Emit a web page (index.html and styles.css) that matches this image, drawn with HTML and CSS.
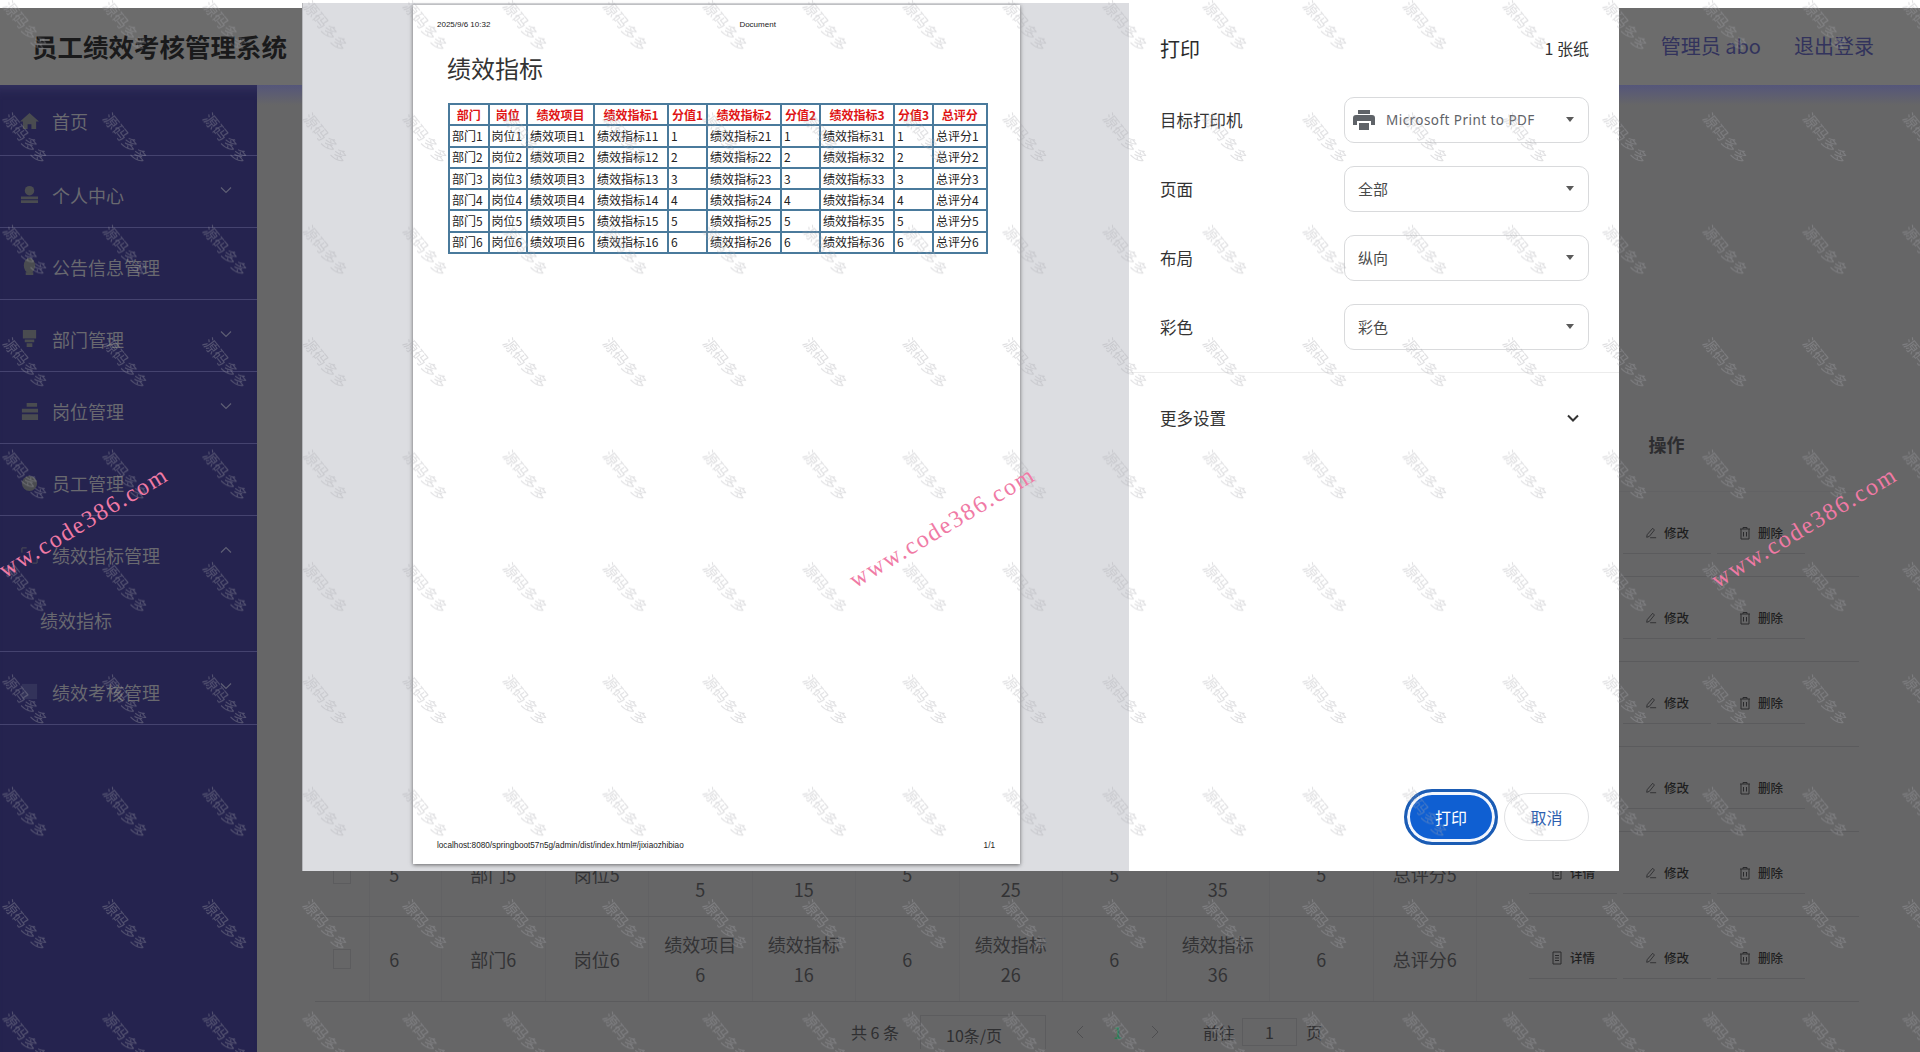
FILE: index.html
```html
<!DOCTYPE html>
<html lang="zh-CN">
<head>
<meta charset="utf-8">
<title>员工绩效考核管理系统</title>
<link rel="stylesheet" href="styles.css">
</head>
<body>
<svg class="defs" aria-hidden="true">
  <symbol id="i-doc" viewBox="0 0 12 14"><path d="M2 1h8v12H2zM4 4.500h4M4 7h4M4 9.500h4" fill="none" stroke="currentColor"/></symbol>
  <symbol id="i-edit" viewBox="0 0 14 14"><path d="M9 1.500l2 2-6 7.500-3 1 .5-3zM6 12.500h7" fill="none" stroke="currentColor"/></symbol>
  <symbol id="i-del" viewBox="0 0 12 14"><path d="M1 3h10M4 3V1.500h4V3M2 3v10h8V3M4.500 6v4.500M7.500 6v4.500" fill="none" stroke="currentColor"/></symbol>
  <symbol id="i-down" viewBox="0 0 12 8"><path d="M1 1.500l5 5 5-5" fill="none" stroke="currentColor" stroke-width="1.200"/></symbol>
  <symbol id="i-down-bold" viewBox="0 0 12 8"><path d="M1 1.500l5 5 5-5" fill="none" stroke="currentColor" stroke-width="2"/></symbol>
  <symbol id="i-up" viewBox="0 0 12 8"><path d="M1 6.500l5-5 5 5" fill="none" stroke="currentColor" stroke-width="1.200"/></symbol>
</svg>

<div class="app">
  <header class="topbar">
    <h1 class="brand">员工绩效考核管理系统</h1>
    <div class="account"><span>管理员 abo</span><span>退出登录</span></div>
  </header>
  <div class="body-row">
    <nav class="sidebar">
      <div class="nav-item nav-first">
        <svg class="nav-icon" viewBox="0 0 20 20"><path d="M10 2L0 11h3v8h5v-5h4v5h5v-8h3z"/></svg>
        <span>首页</span>
      </div>
      <div class="nav-item">
        <svg class="nav-icon" viewBox="0 0 20 20"><circle cx="10" cy="6" r="5"/><path d="M1 12h18v3H1zM1 16h18v3H1z"/></svg>
        <span>个人中心</span>
        <svg class="nav-arrow"><use href="#i-down"/></svg>
      </div>
      <div class="nav-item">
        <svg class="nav-icon" viewBox="0 0 20 20"><ellipse cx="10" cy="9" rx="6" ry="8"/><path d="M6 16h8v3H6z"/></svg>
        <span>公告信息管理</span>
      </div>
      <div class="nav-item">
        <svg class="nav-icon" viewBox="0 0 20 20"><path d="M3 1h14v9H3zM5 11h10v3H5zM7 15h6v4H7z"/></svg>
        <span>部门管理</span>
        <svg class="nav-arrow"><use href="#i-down"/></svg>
      </div>
      <div class="nav-item">
        <svg class="nav-icon" viewBox="0 0 20 20"><path d="M7 1h11v4H7zM2 7h17v4H2zM2 13h17v6H2z"/></svg>
        <span>岗位管理</span>
        <svg class="nav-arrow"><use href="#i-down"/></svg>
      </div>
      <div class="nav-item">
        <svg class="nav-icon" viewBox="0 0 20 20"><circle cx="10" cy="10" r="8"/></svg>
        <span>员工管理</span>
      </div>
      <div class="nav-group">
        <div class="nav-item nav-open">
          <svg class="nav-icon nav-icon-faint" viewBox="0 0 20 20"><path d="M2 7V2h5M13 18h5v-5" fill="none" stroke="currentColor"/></svg>
          <span>绩效指标管理</span>
          <svg class="nav-arrow"><use href="#i-up"/></svg>
        </div>
        <div class="nav-sub">绩效指标</div>
      </div>
      <div class="nav-item">
        <svg class="nav-icon nav-icon-faint" viewBox="0 0 20 20"><path d="M2 2h16v16H2z"/></svg>
        <span>绩效考核管理</span>
        <svg class="nav-arrow"><use href="#i-down"/></svg>
      </div>
    </nav>
    <main class="content">
      <table class="data">
        <colgroup>
          <col class="c-check"><col class="c-id">
          <col class="c-n"><col class="c-n"><col class="c-n"><col class="c-n"><col class="c-n"><col class="c-n"><col class="c-n"><col class="c-n"><col class="c-n"><col class="c-n">
          <col class="c-ops">
        </colgroup>
        <thead>
          <tr><th></th><th class="cell-id">序号</th><th>部门</th><th>岗位</th><th>绩效项目</th><th>绩效指标1</th><th>分值1</th><th>绩效指标2</th><th>分值2</th><th>绩效指标3</th><th>分值3</th><th>总评分</th><th class="th-ops">操作</th></tr>
        </thead>
        <tbody>
          <tr><td><span class="check"></span></td><td class="cell-id">1</td><td>部门1</td><td>岗位1</td><td>绩效项目1</td><td>绩效指标11</td><td>1</td><td>绩效指标21</td><td>1</td><td>绩效指标31</td><td>1</td><td>总评分1</td>
            <td><div class="ops"><a class="op"><svg class="op-icon"><use href="#i-doc"/></svg>详情</a><a class="op"><svg class="op-icon"><use href="#i-edit"/></svg>修改</a><a class="op"><svg class="op-icon"><use href="#i-del"/></svg>删除</a></div></td></tr>
          <tr><td><span class="check"></span></td><td class="cell-id">2</td><td>部门2</td><td>岗位2</td><td>绩效项目2</td><td>绩效指标12</td><td>2</td><td>绩效指标22</td><td>2</td><td>绩效指标32</td><td>2</td><td>总评分2</td>
            <td><div class="ops"><a class="op"><svg class="op-icon"><use href="#i-doc"/></svg>详情</a><a class="op"><svg class="op-icon"><use href="#i-edit"/></svg>修改</a><a class="op"><svg class="op-icon"><use href="#i-del"/></svg>删除</a></div></td></tr>
          <tr><td><span class="check"></span></td><td class="cell-id">3</td><td>部门3</td><td>岗位3</td><td>绩效项目3</td><td>绩效指标13</td><td>3</td><td>绩效指标23</td><td>3</td><td>绩效指标33</td><td>3</td><td>总评分3</td>
            <td><div class="ops"><a class="op"><svg class="op-icon"><use href="#i-doc"/></svg>详情</a><a class="op"><svg class="op-icon"><use href="#i-edit"/></svg>修改</a><a class="op"><svg class="op-icon"><use href="#i-del"/></svg>删除</a></div></td></tr>
          <tr><td><span class="check"></span></td><td class="cell-id">4</td><td>部门4</td><td>岗位4</td><td>绩效项目4</td><td>绩效指标14</td><td>4</td><td>绩效指标24</td><td>4</td><td>绩效指标34</td><td>4</td><td>总评分4</td>
            <td><div class="ops"><a class="op"><svg class="op-icon"><use href="#i-doc"/></svg>详情</a><a class="op"><svg class="op-icon"><use href="#i-edit"/></svg>修改</a><a class="op"><svg class="op-icon"><use href="#i-del"/></svg>删除</a></div></td></tr>
          <tr><td><span class="check"></span></td><td class="cell-id">5</td><td>部门5</td><td>岗位5</td><td>绩效项目5</td><td>绩效指标15</td><td>5</td><td>绩效指标25</td><td>5</td><td>绩效指标35</td><td>5</td><td>总评分5</td>
            <td><div class="ops"><a class="op"><svg class="op-icon"><use href="#i-doc"/></svg>详情</a><a class="op"><svg class="op-icon"><use href="#i-edit"/></svg>修改</a><a class="op"><svg class="op-icon"><use href="#i-del"/></svg>删除</a></div></td></tr>
          <tr><td><span class="check"></span></td><td class="cell-id">6</td><td>部门6</td><td>岗位6</td><td>绩效项目6</td><td>绩效指标16</td><td>6</td><td>绩效指标26</td><td>6</td><td>绩效指标36</td><td>6</td><td>总评分6</td>
            <td><div class="ops"><a class="op"><svg class="op-icon"><use href="#i-doc"/></svg>详情</a><a class="op"><svg class="op-icon"><use href="#i-edit"/></svg>修改</a><a class="op"><svg class="op-icon"><use href="#i-del"/></svg>删除</a></div></td></tr>
        </tbody>
      </table>
      <div class="pager">
        <span class="pg-total">共 6 条</span>
        <span class="pg-size">10条/页</span>
        <svg class="pg-arrow" viewBox="0 0 8 14"><path d="M7 1L1 7l6 6" fill="none" stroke="currentColor"/></svg>
        <span class="pg-num">1</span>
        <svg class="pg-arrow" viewBox="0 0 8 14"><path d="M1 1l6 6-6 6" fill="none" stroke="currentColor"/></svg>
        <span class="pg-go">前往</span>
        <span class="pg-input">1</span>
        <span>页</span>
      </div>
    </main>
  </div>
</div>

<section class="print-dialog">
  <div class="preview">
    <article class="sheet">
      <div class="sheet-head"><span>2025/9/6 10:32</span><span class="sheet-doc">Document</span></div>
      <h2 class="sheet-title">绩效指标</h2>
      <table class="sheet-table">
        <colgroup><col class="s1"><col class="s2"><col class="s3"><col class="s4"><col class="s5"><col class="s4"><col class="s5"><col class="s4"><col class="s5"><col class="s6"></colgroup>
        <thead><tr><th>部门</th><th>岗位</th><th>绩效项目</th><th>绩效指标1</th><th>分值1</th><th>绩效指标2</th><th>分值2</th><th>绩效指标3</th><th>分值3</th><th>总评分</th></tr></thead>
        <tbody>
          <tr><td>部门1</td><td>岗位1</td><td>绩效项目1</td><td>绩效指标11</td><td>1</td><td>绩效指标21</td><td>1</td><td>绩效指标31</td><td>1</td><td>总评分1</td></tr>
          <tr><td>部门2</td><td>岗位2</td><td>绩效项目2</td><td>绩效指标12</td><td>2</td><td>绩效指标22</td><td>2</td><td>绩效指标32</td><td>2</td><td>总评分2</td></tr>
          <tr><td>部门3</td><td>岗位3</td><td>绩效项目3</td><td>绩效指标13</td><td>3</td><td>绩效指标23</td><td>3</td><td>绩效指标33</td><td>3</td><td>总评分3</td></tr>
          <tr><td>部门4</td><td>岗位4</td><td>绩效项目4</td><td>绩效指标14</td><td>4</td><td>绩效指标24</td><td>4</td><td>绩效指标34</td><td>4</td><td>总评分4</td></tr>
          <tr><td>部门5</td><td>岗位5</td><td>绩效项目5</td><td>绩效指标15</td><td>5</td><td>绩效指标25</td><td>5</td><td>绩效指标35</td><td>5</td><td>总评分5</td></tr>
          <tr><td>部门6</td><td>岗位6</td><td>绩效项目6</td><td>绩效指标16</td><td>6</td><td>绩效指标26</td><td>6</td><td>绩效指标36</td><td>6</td><td>总评分6</td></tr>
        </tbody>
      </table>
      <div class="sheet-foot"><span>localhost:8080/springboot57n5g/admin/dist/index.html#/jixiaozhibiao</span><span>1/1</span></div>
    </article>
  </div>
  <aside class="panel">
    <div class="panel-title"><span class="panel-h">打印</span><span class="panel-count">1 张纸</span></div>
    <div class="settings">
      <div class="setting"><span>目标打印机</span>
        <div class="select select-printer">
          <svg class="printer" viewBox="0 0 22 20"><path d="M5 0h12v4H5zM3 5h16a3 3 0 0 1 3 3v7h-4v-4H4v4H0V8a3 3 0 0 1 3-3zM6 13h10v7H6z"/></svg>
          <span>Microsoft Print to PDF</span><i class="caret"></i>
        </div>
      </div>
      <div class="setting"><span>页面</span><div class="select"><span>全部</span><i class="caret"></i></div></div>
      <div class="setting"><span>布局</span><div class="select"><span>纵向</span><i class="caret"></i></div></div>
      <div class="setting"><span>彩色</span><div class="select"><span>彩色</span><i class="caret"></i></div></div>
    </div>
    <div class="more"><span>更多设置</span><svg class="more-arrow"><use href="#i-down-bold"/></svg></div>
    <div class="actions"><button class="btn-print">打印</button><button class="btn-cancel">取消</button></div>
  </aside>
</section>

<svg class="watermark" width="1920" height="1052" aria-hidden="true">
  <defs>
    <pattern id="wm" patternUnits="userSpaceOnUse" x="-26" y="-29" width="100" height="112.400">
      <text class="wm-text" transform="translate(50 56) rotate(51)" text-anchor="middle" dominant-baseline="middle">源码多多</text>
    </pattern>
  </defs>
  <rect width="1920" height="1052" fill="url(#wm)"/>
</svg>
<span class="stamp stamp-a">www.code386.com</span>
<span class="stamp stamp-b">www.code386.com</span>
<span class="stamp stamp-c">www.code386.com</span>
</body>
</html>
```
FILE: styles.css
```css
* { box-sizing: border-box; }
html, body { margin: 0; height: 100%; }
body {
  width: 1920px; height: 1052px; overflow: hidden; position: relative;
  background: #fff; padding-top: 8px;
  font-family: "Noto Sans CJK SC", "Liberation Sans", sans-serif;
}
.defs { position: absolute; width: 0; height: 0; }

.app { height: 1044px; display: flex; flex-direction: column; background: #666667; }
.topbar {
  height: 77px; flex: none; display: flex; align-items: center; justify-content: space-between;
  background: #6c6c6c; padding: 0 46px 2px 32px;
}
.brand { margin: 0; font-size: 25.500px; font-weight: 700; color: #1a1a1b; white-space: nowrap; }
.account { display: flex; gap: 33px; font-size: 20px; color: #32335c; }
.body-row { flex: 1; display: flex; min-height: 0; background: linear-gradient(#55567a 0, #666667 20px); }

.sidebar { width: 257px; flex: none; background: #25234f; box-shadow: inset 0 12px 10px -8px #33325f; }
.nav-item {
  height: 72.200px; display: flex; align-items: center; padding: 7px 0 0 20px;
  font-size: 18px; color: #69696f; border-bottom: 1px solid #45436f; position: relative;
}
.nav-first { height: 70.500px; padding-top: 2px; }
.nav-open { border-bottom: 0; height: 70px; padding-top: 8px; }
.nav-icon { width: 19px; height: 19px; flex: none; margin-right: 13px; fill: #4a4c50; color: #4f5056; }
.nav-icon-faint { fill: #33335a; }
.nav-arrow { position: absolute; left: 220px; top: 30px; width: 12px; height: 8px; color: #5e5e74; }
.nav-group { height: 136px; border-bottom: 1px solid #45436f; }
.nav-sub { padding: 19px 0 0 40px; font-size: 18px; color: #69696f; line-height: 30px; }

.content { flex: 1; min-width: 0; padding: 308px 0 0 58px; }
.data { width: 1544px; border-collapse: collapse; table-layout: fixed; font-size: 18px; color: #333335; text-align: center; line-height: 30px; }
.c-check { width: 54px; }
.c-id { width: 72.500px; }
.c-n { width: 103.500px; }
.c-ops { width: 382.500px; }
.data thead tr { height: 98px; }
.data th { font-size: 18px; font-weight: 700; color: #2d2d30; padding: 4px 0 0; }
.data th.th-ops { text-align: left; padding-left: 172px; }
.data td { height: 85px; padding: 0 14px; border-bottom: 1px solid #5b5b5d; border-right: 1px solid #626264; }
.data tr td:last-child { border-right: 0; padding: 0; }
.data thead th { border-bottom: 1px solid #626264; }
.cell-id { padding-right: 36px !important; }
.check { display: block; width: 18px; height: 20px; margin-left: 4px; border: 1px solid #5c5c5e; }
.ops { display: flex; padding-left: 52px; }
.op { width: 88px; margin-right: 6px; height: 40px; display: flex; align-items: center; justify-content: center; gap: 7px; border-bottom: 1px solid #5b5b5d; font-size: 12.500px; font-weight: 500; color: #1e1e20; }
.op-icon { width: 12px; height: 14px; color: #2a2a2c; flex: none; }

.pager { display: flex; align-items: center; height: 40px; margin: 10px 0 0 536px; font-size: 16px; color: #2f2f31; }
.pg-total { width: 69px; }
.pg-size { width: 126px; height: 34px; padding: 8px 0 0 25px; line-height: 22px; border: 1px solid #5c5c5e; border-bottom: 0; margin-right: 30px; white-space: nowrap; }
.pg-arrow { width: 8px; height: 14px; color: #4e4e50; flex: none; }
.pg-num { margin: 0 29px; width: 9px; color: #2a7a55; font-weight: 500; }
.pg-go { margin-left: 44px; }
.pg-input { width: 55px; height: 28px; margin: 0 9px 0 7px; text-align: center; line-height: 26px; border: 1px solid #5c5c5e; }

.print-dialog { position: absolute; left: 302px; top: 3px; width: 1317px; height: 868px; display: flex; z-index: 2; }
.preview { width: 827px; flex: none; background: #dcdde1; padding: 2px 0 0 110px; border-left: 1px solid #b5b6ba; }
.sheet { width: 607px; height: 859px; background: #fff; box-shadow: 0 1px 4px rgba(0,0,0,.55); padding: 0 25px 13px 24px; display: flex; flex-direction: column; color: #222; }
.sheet-head { display: flex; height: 40px; padding-top: 15px; font: 8px/10px "Liberation Sans", sans-serif; }
.sheet-doc { margin-left: 249px; }
.sheet-title { margin: 0 0 0 10px; height: 58px; padding-top: 1px; font-size: 24px; line-height: 44px; font-weight: 400; color: #333; }
.sheet-table { width: 535px; margin-left: 11px; border-collapse: collapse; table-layout: fixed; font-size: 12px; line-height: 14px; border: 2px solid #4a7a9c; }
.sheet-table th, .sheet-table td { height: 21.300px; padding: 0 0 0 2px; border: 2px solid #4a7a9c; white-space: nowrap; overflow: hidden; text-align: left; font-weight: 400; }
.sheet-table th { text-align: center; color: #e01515; font-weight: 700; padding: 0; }
.s1 { width: 39.500px; } .s2 { width: 38.500px; } .s3 { width: 67px; } .s4 { width: 74px; } .s5 { width: 39px; } .s6 { width: 53.500px; }
.sheet-foot { margin-top: auto; display: flex; justify-content: space-between; font: 8.200px/10px "Liberation Sans", sans-serif; }

.panel { flex: 1; background: #fff; display: flex; flex-direction: column; color: #333; }
.panel-title { display: flex; align-items: center; justify-content: space-between; height: 34px; margin: 28px 30px 32px 31px; }
.panel-h { font-size: 20px; color: #2b2b2b; }
.panel-count { font-size: 16px; }
.settings { display: flex; flex-direction: column; gap: 23px; padding: 0 30px 22px 31px; border-bottom: 1px solid #ececec; }
.setting { height: 46px; display: flex; align-items: center; justify-content: space-between; font-size: 16.500px; }
.select { width: 245px; height: 46px; border: 1px solid #d9dadc; border-radius: 10px; display: flex; align-items: center; padding: 0 13px 2px; font-size: 15px; color: #4a4a4a; position: relative; }
.select-printer { padding-left: 8px; padding-bottom: 0; gap: 11px; font-family: "Noto Sans", sans-serif; font-size: 13.500px; letter-spacing: .45px; color: #5f6368; }
.printer { width: 22px; height: 20px; fill: #5f6368; flex: none; }
.caret { position: absolute; right: 14px; top: 19px; border: 4.500px solid transparent; border-top: 5px solid #5a5a5a; border-bottom: 0; }
.more { display: flex; align-items: center; justify-content: space-between; height: 90px; padding: 0 40px 0 31px; font-size: 16.500px; }
.more-arrow { width: 12px; height: 8px; color: #333; }
.actions { margin-top: auto; display: flex; align-items: center; justify-content: flex-end; gap: 6px; padding: 0 30px 26px 0; }
.btn-print, .btn-cancel { font: 16px "Noto Sans CJK SC", sans-serif; padding: 0; background: #fff; cursor: default; }
.btn-print { width: 94px; height: 56px; border-radius: 28px; border: 3px solid #1b5cb4; background: #0f5fd2; box-shadow: inset 0 0 0 3px #f2f6fd; color: #fff; }
.btn-cancel { width: 85px; height: 48px; border-radius: 24px; border: 1px solid #e0e1e3; color: #2d5fb0; }

.watermark { position: absolute; left: 0; top: 0; z-index: 3; pointer-events: none; }
.wm-text { font-family: "Noto Sans CJK SC", sans-serif; font-size: 15px; fill: rgba(165,165,172,.36); }
.stamp { position: absolute; z-index: 4; top: 510px; width: 230px; text-align: center; font: 24px/34px "Liberation Serif", serif; letter-spacing: 1.800px; color: #f07aa5; transform: rotate(-31deg); white-space: nowrap; }
.stamp-a { left: -40px; }
.stamp-b { left: 827px; }
.stamp-c { left: 1689px; }
```
